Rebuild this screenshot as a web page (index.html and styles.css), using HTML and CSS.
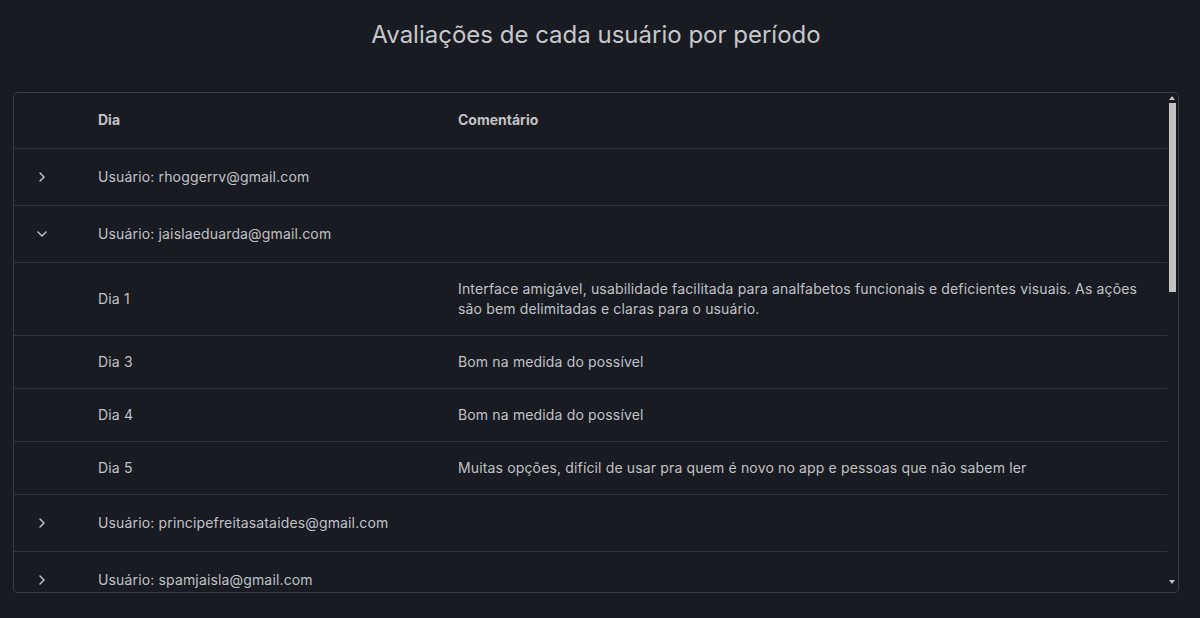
FILE: index.html
```html
<!DOCTYPE html>
<html lang="pt-BR">
<head>
<meta charset="utf-8">
<title>Avaliações</title>
<link rel="stylesheet" href="styles.css">
</head>
<body>
<div class="page">
  <h1 class="title">Avaliações de cada usuário por período</h1>
  <div class="table-paper">
    <div class="scroller">
      <table class="grid">
        <colgroup><col class="c-exp"><col class="c-dia"><col class="c-com"></colgroup>
        <thead>
          <tr><th></th><th>Dia</th><th>Comentário</th></tr>
        </thead>
        <tbody>
          <tr class="user"><td class="exp"><span class="chev"><svg viewBox="0 0 24 24" width="16" height="16"><path d="M9 6l6 6-6 6"/></svg></span></td><td colspan="2">Usuário: rhoggerrv@gmail.com</td></tr>
          <tr class="user"><td class="exp"><span class="chev"><svg viewBox="0 0 24 24" width="16" height="16"><path d="M6 9l6 6 6-6"/></svg></span></td><td colspan="2">Usuário: jaislaeduarda@gmail.com</td></tr>
          <tr class="detail"><td></td><td>Dia 1</td><td>Interface amigável, usabilidade facilitada para analfabetos funcionais e deficientes visuais. As ações são bem delimitadas e claras para o usuário.</td></tr>
          <tr class="detail"><td></td><td>Dia 3</td><td>Bom na medida do possível</td></tr>
          <tr class="detail"><td></td><td>Dia 4</td><td>Bom na medida do possível</td></tr>
          <tr class="detail"><td></td><td>Dia 5</td><td>Muitas opções, difícil de usar pra quem é novo no app e pessoas que não sabem ler</td></tr>
          <tr class="user"><td class="exp"><span class="chev"><svg viewBox="0 0 24 24" width="16" height="16"><path d="M9 6l6 6-6 6"/></svg></span></td><td colspan="2">Usuário: principefreitasataides@gmail.com</td></tr>
          <tr class="user"><td class="exp"><span class="chev"><svg viewBox="0 0 24 24" width="16" height="16"><path d="M9 6l6 6-6 6"/></svg></span></td><td colspan="2">Usuário: spamjaisla@gmail.com</td></tr>
        </tbody>
      </table>
    </div>
    <div class="sbar" aria-hidden="true">
      <div class="sb-btn up"><span class="tri-up"></span></div>
      <div class="thumb"></div>
      <div class="sb-fill"></div>
      <div class="sb-btn down"><span class="tri-down"></span></div>
    </div>
  </div>
</div>
</body>
</html>
```

FILE: styles.css
```css
html, body {
  margin: 0;
  padding: 0;
  background: #181b22;
  height: 100%;
  overflow: hidden;
}
body {
  font-family: Inter, "Noto Sans", sans-serif;
  color: #c1c2c5;
  font-size: 14px;
}
.page {
  padding: 17px 21px 0 13px;
}
.title {
  margin: 0 0 39px;
  text-align: center;
  font-size: 24px;
  line-height: 36px;
  font-weight: 400;
  color: #c6c7ca;
}
.table-paper {
  display: flex;
  height: 499px;
  border: 1px solid #373a40;
  border-radius: 4px;
  overflow: hidden;
}
.scroller {
  flex: 1;
  min-width: 0;
  overflow: hidden;
}
.grid {
  width: 100%;
  border-collapse: collapse;
  table-layout: fixed;
}
.c-exp { width: 68px; }
.c-dia { width: 360px; }
th {
  text-align: left;
  font-weight: 700;
  font-size: 14px;
  line-height: 24px;
  padding: 15px 16px 16px;
  color: #c1c2c5;
  border-bottom: 1px solid #2f3238;
}
td {
  padding: 16px;
  line-height: 20px;
  letter-spacing: 0.15px;
  vertical-align: middle;
  border-bottom: 1px solid #2f3238;
  color: #c1c2c5;
}
.user td {
  line-height: 24px;
}
.exp {
  padding-right: 0;
}
.chev {
  display: flex;
  width: 24px;
  height: 24px;
  align-items: center;
  justify-content: center;
}
.chev svg {
  fill: none;
  stroke: #c1c2c5;
  stroke-width: 2.2;
  stroke-linecap: round;
  stroke-linejoin: round;
}
.sbar {
  width: 11px;
  flex: none;
  display: flex;
  flex-direction: column;
}
.sb-btn {
  display: flex;
  justify-content: center;
  padding-right: 1px;
}
.sb-btn.up {
  height: 10px;
  align-items: flex-end;
}
.sb-btn.up .tri-up {
  margin-bottom: 3px;
}
.sb-btn.down {
  height: 12px;
  align-items: flex-start;
}
.tri-up {
  width: 0;
  height: 0;
  border-left: 3.5px solid transparent;
  border-right: 3.5px solid transparent;
  border-bottom: 4px solid #c4c4c4;
}
.tri-down {
  width: 0;
  height: 0;
  border-left: 3.5px solid transparent;
  border-right: 3.5px solid transparent;
  border-top: 4px solid #c4c4c4;
}
.thumb {
  height: 189px;
  margin: 0 2px;
  background: #c1c1c1;
  flex: none;
}
.sb-fill {
  flex: 1;
}
```
